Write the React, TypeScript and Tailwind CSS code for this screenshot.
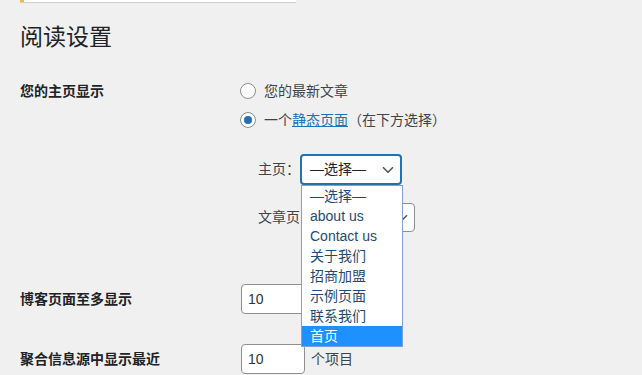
import { ChevronDown } from "lucide-react";

const pages = ["—选择—", "about us", "Contact us", "关于我们", "招商加盟", "示例页面", "联系我们", "首页"];

function Radio({ checked }: { checked?: boolean }) {
  return (
    <span className="w-4 h-4 rounded-full border border-[#8c8f94] bg-white flex items-center justify-center shrink-0">
      {checked && <span className="w-2 h-2 rounded-full bg-[#2271b1]" />}
    </span>
  );
}

export default function App() {
  return (
    <div
      className="w-[642px] h-[375px] overflow-hidden bg-[#f0f0f1] pl-5 text-[14px] text-[#3c434a]"
      style={{ fontFamily: '"Liberation Sans", "Noto Sans CJK SC", sans-serif' }}
    >
      <div className="w-[276px] h-[2px] bg-white border-l-4 border-[#f0b849] shadow-[0_1px_1px_rgba(0,0,0,0.15)]" />

      <h1 className="mt-[21px] text-[23px] leading-[29px] font-normal text-[#1d2327]">阅读设置</h1>

      <div className="grid grid-cols-[220px_1fr] mt-[31px]">
        <div className="font-bold text-[#1d2327] leading-4">您的主页显示</div>
        <div>
          <div className="flex flex-col gap-[13px]">
            <label className="flex items-center gap-2 leading-4">
              <Radio />
              <span>您的最新文章</span>
            </label>
            <label className="flex items-center gap-2 leading-4">
              <Radio checked />
              <span>
                一个<span className="text-[#2271b1] underline">静态页面</span>（在下方选择）
              </span>
            </label>
          </div>

          <div className="mt-[26px] pl-[18px] flex items-center">
            <span className="w-[42px]">主页：</span>
            <div className="relative">
              <div className="w-[102px] h-[31px] border-2 border-[#2271b1] rounded-[4px] bg-white flex items-center justify-between pl-2 pr-[3px] text-[#1d2327]">
                <span>—选择—</span>
                <ChevronDown size={18} strokeWidth={2.2} className="text-[#50575e]" />
              </div>
              <ul className="absolute top-full left-[1px] w-[102px] bg-white border border-[#7f9fd6] z-10">
                {pages.map((p, i) => (
                  <li
                    key={p}
                    className={
                      i === pages.length - 1
                        ? "h-5 leading-5 pl-2 bg-[#1e90ff] text-white"
                        : "h-5 leading-5 pl-2 text-[#1f4a72]"
                    }
                  >
                    {p}
                  </li>
                ))}
              </ul>
            </div>
          </div>

          <div className="mt-[18px] pl-[18px] flex items-center">
            <span className="w-[56px]">文章页：</span>
            <div className="w-[101px] h-[29px] border border-[#8c8f94] rounded-[4px] bg-white flex items-center justify-end pr-[3px]">
              <ChevronDown size={18} strokeWidth={2.2} className="text-[#50575e]" />
            </div>
          </div>
        </div>
      </div>

      <div className="grid grid-cols-[220px_1fr] items-center mt-[52px]">
        <div className="font-bold text-[#1d2327]">博客页面至多显示</div>
        <div className="pl-[1px]">
          <div className="w-[64px] h-[30px] border border-[#8c8f94] rounded-[4px] bg-white flex items-center pl-[6px] text-[#2c3338]">10</div>
        </div>
      </div>

      <div className="grid grid-cols-[220px_1fr] items-center mt-[30px]">
        <div className="font-bold text-[#1d2327]">聚合信息源中显示最近</div>
        <div className="pl-[1px] flex items-center">
          <div className="w-[64px] h-[30px] border border-[#8c8f94] rounded-[4px] bg-white flex items-center pl-[6px] text-[#2c3338]">10</div>
          <span className="ml-[6px]">个项目</span>
        </div>
      </div>
    </div>
  );
}
